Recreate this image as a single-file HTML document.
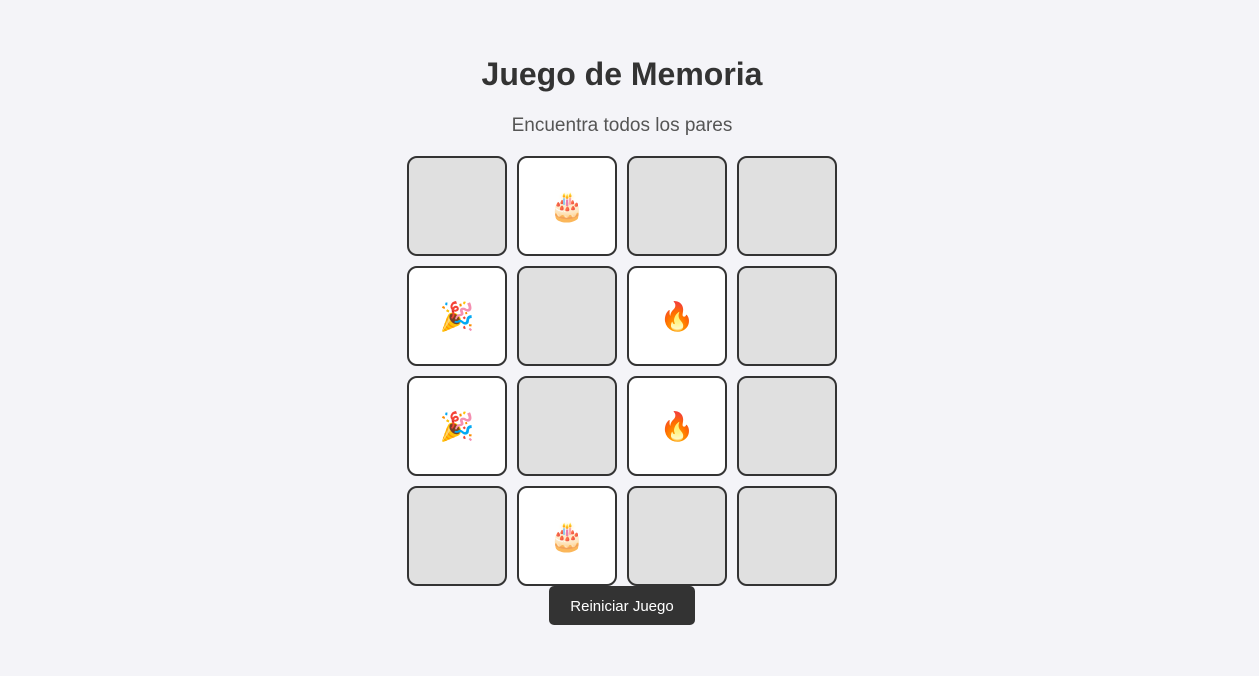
<!DOCTYPE html>
<html><head><meta charset="utf-8"><style>
body{margin:0;background:#f4f4f8;font-family:"Liberation Sans",Arial,sans-serif;width:1259px;height:676px;position:relative;overflow:hidden}
h1{position:absolute;left:0;width:1244px;top:56px;margin:0;text-align:center;font-size:32px;color:#333;font-weight:bold}
p{position:absolute;left:0;width:1244px;top:115px;margin:0;text-align:center;font-size:19px;color:#555}
.c{position:absolute;width:96px;height:96px;border:2px solid #333;border-radius:10px;background:#e0e0e0;display:flex;align-items:center;justify-content:center;font-size:28px;font-family:"Noto Color Emoji","OpenMoji",sans-serif}
.o{background:#fff}
button{position:absolute;left:549px;top:586px;width:146px;height:39px;background:#333;color:#fff;border:0;border-radius:5px;font-family:"Liberation Sans",Arial,sans-serif;font-size:15px;padding:0;padding-top:2px}
</style></head><body>
<h1>Juego de Memoria</h1>
<p>Encuentra todos los pares</p>
<div class="c" style="left:407px;top:156px"></div>
<div class="c o" style="left:517px;top:156px">🎂</div>
<div class="c" style="left:627px;top:156px"></div>
<div class="c" style="left:737px;top:156px"></div>
<div class="c o" style="left:407px;top:266px">🎉</div>
<div class="c" style="left:517px;top:266px"></div>
<div class="c o" style="left:627px;top:266px">🔥</div>
<div class="c" style="left:737px;top:266px"></div>
<div class="c o" style="left:407px;top:376px">🎉</div>
<div class="c" style="left:517px;top:376px"></div>
<div class="c o" style="left:627px;top:376px">🔥</div>
<div class="c" style="left:737px;top:376px"></div>
<div class="c" style="left:407px;top:486px"></div>
<div class="c o" style="left:517px;top:486px">🎂</div>
<div class="c" style="left:627px;top:486px"></div>
<div class="c" style="left:737px;top:486px"></div>
<button>Reiniciar Juego</button>
</body></html>
